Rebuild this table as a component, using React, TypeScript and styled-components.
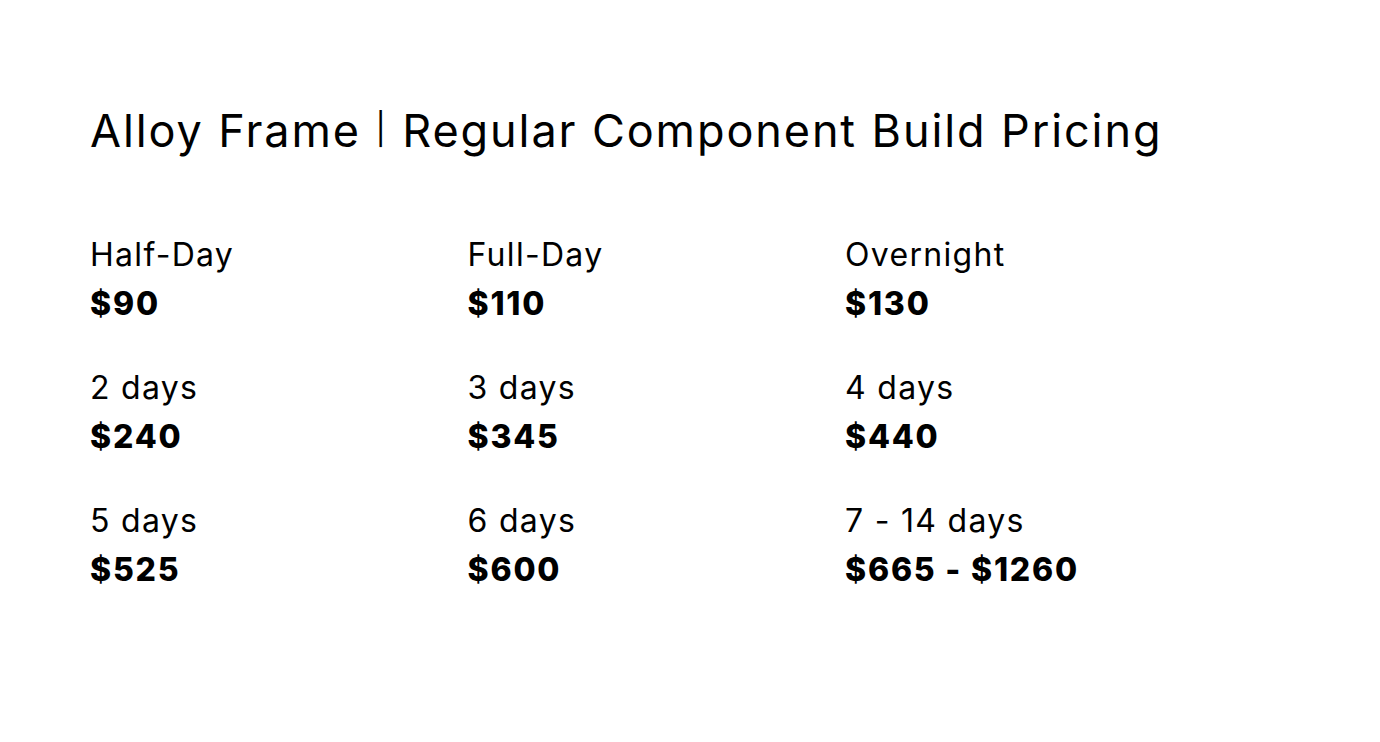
import React from "react";
import styled, { createGlobalStyle } from "styled-components";

const Global = createGlobalStyle`
  html, body { margin: 0; padding: 0; background: #fff; }
  body { font-family: "Inter", "Liberation Sans", sans-serif; color: #000; }
`;

const Page = styled.main`
  padding: 98px 90px 0 90px;
`;

const Title = styled.h1`
  margin: 0;
  font-size: 45px;
  font-weight: 400;
  line-height: 62px;
  letter-spacing: 1.9px;
  white-space: nowrap;
`;

const Divider = styled.span`
  font-size: 31px;
  vertical-align: 7px;
`;

const Grid = styled.div`
  display: grid;
  grid-template-columns: repeat(3, 377.5px);
  row-gap: 38px;
  margin-top: 70px;
`;

const Item = styled.div`
  display: flex;
  flex-direction: column;
  gap: 3px;
`;

const Label = styled.div`
  font-size: 32px;
  font-weight: 400;
  line-height: 46px;
  letter-spacing: 1.3px;
  white-space: nowrap;
`;

const Price = styled.div`
  font-size: 32px;
  font-weight: 800;
  line-height: 46px;
  letter-spacing: 1.8px;
  white-space: nowrap;
`;

const items = [
  ["Half-Day", "$90"],
  ["Full-Day", "$110"],
  ["Overnight", "$130"],
  ["2 days", "$240"],
  ["3 days", "$345"],
  ["4 days", "$440"],
  ["5 days", "$525"],
  ["6 days", "$600"],
  ["7 - 14 days", "$665 - $1260"],
];

export default function App() {
  return (
    <>
      <Global />
      <Page>
        <Title>
          Alloy Frame <Divider>|</Divider> Regular Component Build Pricing
        </Title>
        <Grid>
          {items.map(([l, p]) => (
            <Item key={l}>
              <Label>{l}</Label>
              <Price>{p}</Price>
            </Item>
          ))}
        </Grid>
      </Page>
    </>
  );
}
